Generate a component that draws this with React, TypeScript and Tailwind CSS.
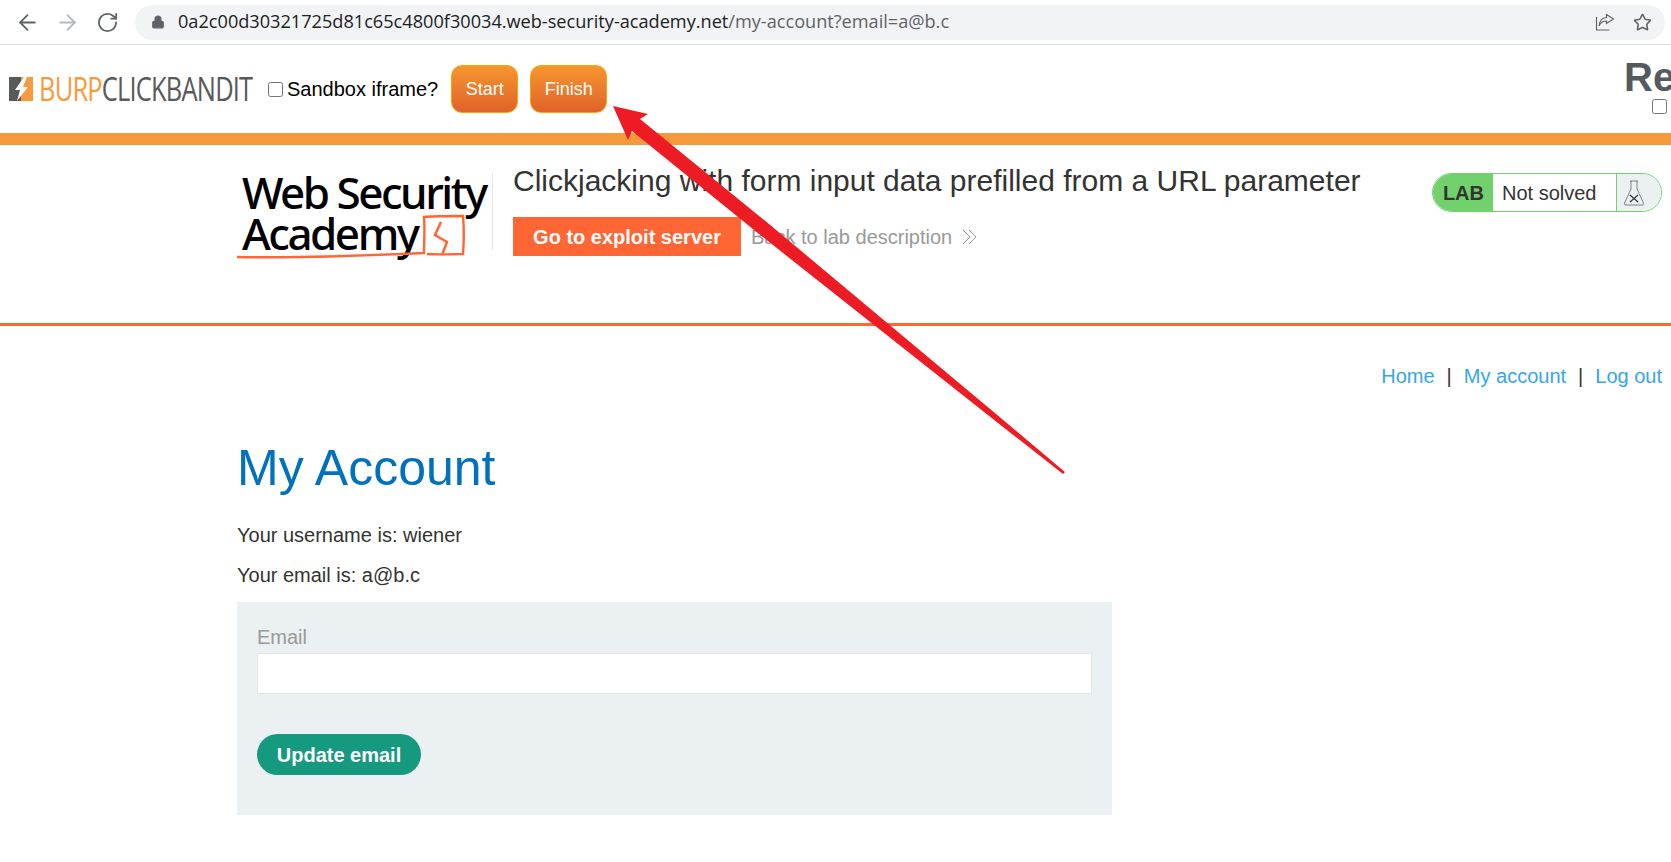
import React from "react";
import { ArrowLeft, ArrowRight, RotateCw, Lock, Star } from "lucide-react";

const SANS = "font-['Liberation_Sans',Arial,sans-serif]";

const BrowserBar = () => (
  <div className="flex h-[45px] items-center border-b border-[#dadce0] bg-white pl-[15px] pr-[6px]">
    <ArrowLeft className="h-[25px] w-[25px] text-[#5f6368]" strokeWidth={1.7} />
    <ArrowRight className="ml-[15px] h-[25px] w-[25px] text-[#b4b7bb]" strokeWidth={1.7} />
    <RotateCw className="ml-[16px] h-[23px] w-[23px] text-[#5f6368]" strokeWidth={1.9} />
    <div className="ml-[16px] flex h-[35px] flex-1 items-center rounded-full bg-[#f1f3f4] pl-[16px] pr-[13px]">
      <Lock className="h-[14px] w-[14px] fill-[#5f6368] text-[#5f6368]" />
      <span className="ml-[13px] flex-1 whitespace-nowrap font-['Open_Sans',sans-serif] text-[18.15px] text-[#202124]">
        0a2c00d30321725d81c65c4800f30034.web-security-academy.net
        <span className="text-[#5f6368]">/my-account?email=a@b.c</span>
      </span>
      <svg viewBox="0 0 20 20" className="h-[20px] w-[20px] text-[#5f6368]" fill="none" stroke="currentColor" strokeWidth="1.2">
        <path d="M1.5 5v13h13" />
        <path d="M11.5 2.5 18.5 7l-7 4.5V9C8 9 5.5 10.5 4 14c.4-5 3-8 7.500-8.500z" />
      </svg>
      <Star className="ml-[18px] h-[19px] w-[19px] text-[#5f6368]" strokeWidth={2} />
    </div>
  </div>
);

const BanditLogo = () => (
  <div className="flex items-center">
    <svg viewBox="0 0 24 24" className="h-[24px] w-[24px]">
      <rect x="0" y="0" width="12" height="24" fill="#58595b" />
      <rect x="12" y="0" width="12" height="24" fill="#f79a3e" />
      <path d="M15 0 6 13h5l-3 11 11-14h-5l4-10z" fill="#fff" />
    </svg>
    <span className="ml-[6px] inline-block w-[215px] origin-left scale-x-[0.795] whitespace-nowrap font-['Open_Sans',sans-serif] text-[32px] font-normal leading-none tracking-[-1px] text-[#58595b]">
      <span className="text-[#f79a3e]">BURP</span>CLICKBANDIT
    </span>
  </div>
);

const BanditButton = ({ label, className }: { label: string; className: string }) => (
  <button
    className={`h-[48px] rounded-[11px] border border-[#ffa500] bg-gradient-to-b from-[#f5962f] to-[#e0622a] text-[18px] text-white ${className}`}
  >
    {label}
  </button>
);

const BanditBar = () => (
  <div className="flex h-[100px] items-start justify-between overflow-hidden border-b-[12px] border-[#f59a3a] bg-white">
    <div className="flex h-[87px] items-center pl-[9px] pt-[1px]">
      <BanditLogo />
      <input type="checkbox" className="ml-[14px] h-[15px] w-[15px]" />
      <span className="ml-[4px] text-[20px] text-black">Sandbox iframe?</span>
      <BanditButton label="Start" className="ml-[13px] w-[67px]" />
      <BanditButton label="Finish" className="ml-[12px] w-[77px]" />
    </div>
    <div className="flex w-[47px] flex-col pt-[9px]">
      <span className="whitespace-nowrap text-[40px] font-bold leading-[46px] text-[#555a5f]">Re</span>
      <input type="checkbox" className="-mt-[1px] ml-[28px] h-[15px] w-[15px]" />
    </div>
  </div>
);

const AcademyLogo = () => (
  <div className="relative mt-[16px] h-[100px] w-[252px] text-black">
    <div className="whitespace-nowrap pl-[5px] pt-[11px] font-['Noto_Sans',sans-serif] text-[44px] font-medium leading-[41px] tracking-[-2.5px]">
      Web Security
    </div>
    <div className="whitespace-nowrap pl-[5px] font-['Noto_Sans',sans-serif] text-[44px] font-medium leading-[41px] tracking-[-2.5px]">
      Academy
    </div>
    <svg viewBox="0 0 252 100" className="absolute inset-0 h-full w-full" fill="none" stroke="#ff6633">
      <path d="M0 96c60 1 120-1 187-4 0-10 1-25 0-36 12-1 26-1 39-1 1 11 1 25 0 38-10 0-24 1-36 0" strokeWidth="2.4" />
      <path d="M204 61l-6 13 12 7-5 13" strokeWidth="2.5" />
    </svg>
  </div>
);

const LabBadge = () => (
  <div className="mt-[28px] flex h-[39px] w-[230px] overflow-hidden rounded-full border border-[#70d16d] text-[20px]">
    <div className="flex w-[60px] items-center justify-end bg-[#70d16d] pr-[9px] font-bold text-[#333332]">LAB</div>
    <div className="flex w-[124px] items-center border-r border-[#70d16d] bg-white pl-[9px] text-[#333332]">Not solved</div>
    <div className="flex flex-1 items-center justify-center bg-[#ebf0f2] pr-[11px]">
      <svg viewBox="0 0 22 26" className="h-[26px] w-[22px]" fill="none" stroke="#555" strokeWidth="0.7">
        <path d="M7 1h8M8 1v8L1.500 23c-.3 1 .2 2 1 2h17c.8 0 1.300-1 1-2L14 9V1" />
        <path d="M7 15 15 22M15 15 7 22" stroke="#333332" strokeWidth="1.200" />
      </svg>
    </div>
  </div>
);

const LabHeader = () => (
  <div className="flex h-[181px] border-b-[3px] border-[#ff6633] pl-[237px] pr-[9px]">
    <AcademyLogo />
    <div className="ml-[3px] mt-[28px] h-[77px] border-l border-[#e6e6e6]" />
    <div className="ml-[20px] mt-[18px] flex-1">
      <h2 className="text-[30px] leading-[36px] text-[#333332]">
        Clickjacking with form input data prefilled from a URL parameter
      </h2>
      <div className="mt-[18px] flex items-center">
        <a className="flex h-[39px] w-[228px] items-center justify-center bg-[#ff6633] text-[20px] font-bold text-white">
          Go to exploit server
        </a>
        <a className="ml-[10px] text-[20px] text-[#999]">Back to lab description</a>
        <svg viewBox="0 0 16 16" className="ml-[10px] h-[16px] w-[16px]" fill="none" stroke="#999" strokeWidth="1">
          <path d="M1 1l7 7-7 7M7 1l7 7-7 7" />
        </svg>
      </div>
    </div>
    <LabBadge />
  </div>
);

const AccountPage = () => (
  <div className="relative">
    <div className="flex justify-end gap-[12px] pr-[9px] pt-[38px] text-[20px] leading-[24px] text-[#333332]">
      <a className="text-[#36a6e8]">Home</a>
      <span>|</span>
      <a className="text-[#36a6e8]">My account</a>
      <span>|</span>
      <a className="text-[#36a6e8]">Log out</a>
    </div>
    <div className="ml-[237px] w-[875px]">
      <h1 className="mt-[50px] text-[50px] leading-[60px] text-[#0071bc]">My Account</h1>
      <p className="mt-[25px] text-[20px] leading-[24px] text-[#333332]">Your username is: wiener</p>
      <p className="mt-[16px] text-[20px] leading-[24px] text-[#333332]">Your email is: a@b.c</p>
      <form className="mt-[15px] h-[213px] bg-[#ebf0f2] px-[20px] pt-[23px]">
        <label className="block text-[20px] leading-[24px] text-[#999]">Email</label>
        <input type="text" className="mt-[4px] block h-[41px] w-full border border-[#e6e6e6] bg-white" />
        <button type="button" className="mt-[40px] h-[41px] w-[164px] rounded-full bg-[#159a80] text-[20px] font-bold text-white">
          Update email
        </button>
      </form>
    </div>
  </div>
);

const App = () => (
  <div className={`relative h-[862px] w-[1671px] overflow-hidden bg-white ${SANS}`}>
    <BrowserBar />
    <BanditBar />
    <LabHeader />
    <AccountPage />
    {/* red annotation arrow drawn over the page */}
    <svg className="pointer-events-none absolute inset-0" width="1671" height="862" viewBox="0 0 1671 862">
      <path d="M613 106 L648 114 L640 119 L769 224 L1002 419 L1065 472 L1063 474 L998 423 L759 234 L632 131 L628 140 Z" fill="#ed1c24" />
    </svg>
  </div>
);

export default App;
